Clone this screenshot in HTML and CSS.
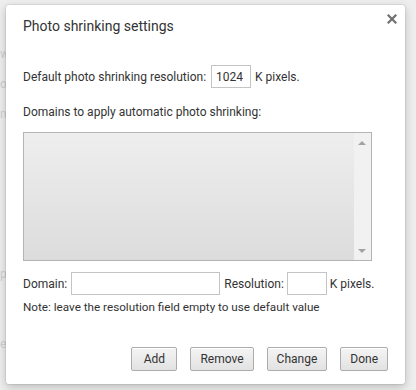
FILE: index.html
```html
<!DOCTYPE html>
<html lang="en">
<head>
    <meta charset="UTF-8">
    <meta name="viewport" content="width=device-width, initial-scale=1.0">
    <title>Photo shrinking settings</title>
    <link rel="stylesheet" href="styles.css">
</head>
<body>
    <!-- страница под оверлеем -->
    <div class="backdrop">
        <div class="backdrop-line b1">w</div>
        <div class="backdrop-line b2">o</div>
        <div class="backdrop-line b3">n</div>
        <div class="backdrop-line b4">p</div>
        <div class="backdrop-line b5">e</div>
    </div>

    <div class="overlay">
        <div class="dialog">
            <div class="dialog-header">
                <h1>Photo shrinking settings</h1>
                <button class="close" type="button" aria-label="Close">
                    <svg width="10" height="10" viewBox="0 0 10 10">
                        <path d="M1.5 1.5 L8.5 8.5 M8.5 1.5 L1.5 8.5" stroke="#707070" stroke-width="2.2" stroke-linecap="square"/>
                    </svg>
                </button>
            </div>

            <div class="row default-row">
                <label for="defaultRes">Default photo shrinking resolution:</label>
                <input type="text" id="defaultRes" class="res-input" value="1024">
                <span>K pixels.</span>
            </div>

            <div class="section-label">Domains to apply automatic photo shrinking:</div>

            <div class="domain-list">
                <div class="list-body"></div>
                <div class="scrollbar">
                    <span class="arrow up"></span>
                    <span class="arrow down"></span>
                </div>
            </div>

            <div class="row domain-row">
                <label for="domain">Domain:</label>
                <input type="text" id="domain" class="domain-input">
                <label for="resolution">Resolution:</label>
                <input type="text" id="resolution" class="res-input small">
                <span>K pixels.</span>
            </div>

            <p class="note">Note: leave the resolution field empty to use default value</p>

            <div class="buttons">
                <button type="button" class="btn">Add</button>
                <button type="button" class="btn">Remove</button>
                <button type="button" class="btn">Change</button>
                <button type="button" class="btn">Done</button>
            </div>
        </div>
    </div>
</body>
</html>
```

FILE: styles.css
```css
:root {
    --text: #333333;
    --border: #c4c4c4;
    --backdrop: #eeeeee;
}

* {
    margin: 0;
    padding: 0;
    box-sizing: border-box;
    font-family: 'Roboto', 'Open Sans', sans-serif;
}

body {
    width: 416px;
    height: 390px;
    overflow: hidden;
    background: var(--backdrop);
    position: relative;
}

.backdrop {
    padding-top: 46px;
    color: #cfcfcf;
    font-size: 12px;
}

.backdrop-line {
    height: 30px;
    line-height: 16px;
}

.backdrop-line.b4 {
    margin-top: 130px;
}

.backdrop-line.b5 {
    margin-top: 40px;
}

.overlay {
    position: absolute;
    inset: 0;
}

.dialog {
    position: absolute;
    left: 6px;
    top: 5px;
    width: 399px;
    height: 379px;
    background: #fff;
    border-radius: 3px;
    box-shadow: 0 0 0 1px rgba(0, 0, 0, 0.06), 0 3px 10px rgba(0, 0, 0, 0.22);
    padding: 0 17px;
    color: var(--text);
    font-size: 12px;
}

.dialog-header {
    padding-top: 11px;
    position: relative;
}

h1 {
    font-size: 14px;
    font-weight: 400;
    line-height: 20px;
    color: #333;
}

.close {
    position: absolute;
    top: 9px;
    right: -9px;
    width: 10px;
    height: 10px;
    border: none;
    background: none;
    display: flex;
}

.row {
    display: flex;
    align-items: center;
    height: 23px;
}

.default-row {
    margin-top: 29px;
}

input {
    height: 23px;
    border: 1px solid var(--border);
    font-size: 12px;
    color: var(--text);
    padding: 0 4px;
    outline: none;
}

.default-row .res-input {
    width: 40px;
    margin: 0 4px 0 5px;
}

.section-label {
    margin-top: 16px;
    line-height: 16px;
}

.domain-list {
    margin-top: 12px;
    width: 349px;
    height: 129px;
    border: 1px solid #b4b4b4;
    display: flex;
}

.list-body {
    flex: 1;
    background: linear-gradient(#eeeeee, #dcdcdc);
}

.scrollbar {
    width: 17px;
    background: #f1f1f1;
    position: relative;
}

.arrow {
    position: absolute;
    left: 4px;
    width: 0;
    height: 0;
    border-left: 4px solid transparent;
    border-right: 4px solid transparent;
}

.arrow.up {
    top: 8px;
    border-bottom: 4px solid #a3a3a3;
}

.arrow.down {
    bottom: 7px;
    border-top: 4px solid #a3a3a3;
}

.domain-row {
    margin-top: 11px;
}

.domain-input {
    width: 149px;
    margin: 0 4px 0 4px;
}

.domain-row .res-input {
    width: 40px;
    margin: 0 3px 0 3px;
}

.note {
    margin-top: 4px;
    line-height: 16px;
    font-size: 11.7px;
}

.buttons {
    margin-top: 32px;
    display: flex;
    justify-content: flex-end;
    gap: 13px;
}

.btn {
    height: 24px;
    padding: 0 9px;
    min-width: 46px;
    border: 1px solid #acacac;
    border-radius: 2px;
    background: linear-gradient(#f4f4f4, #e2e2e2);
    box-shadow: inset 0 1px 0 #fff;
    font-size: 12px;
    color: #333;
}
```
